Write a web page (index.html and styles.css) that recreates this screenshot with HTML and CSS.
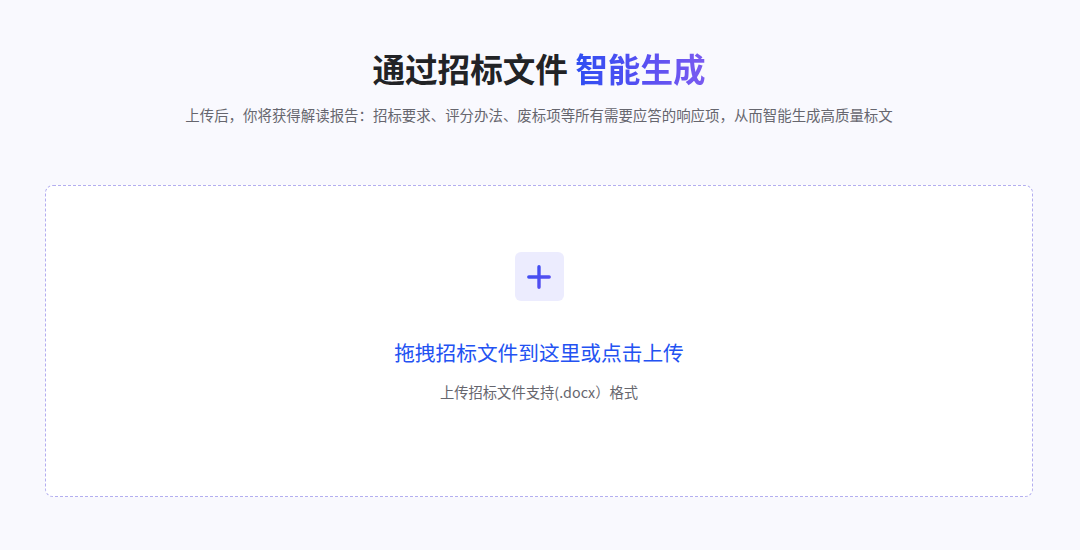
FILE: index.html
```html
<!DOCTYPE html>
<html lang="zh">
<head>
<meta charset="utf-8">
<title>上传招标文件</title>
<link rel="stylesheet" href="styles.css">
</head>
<body>
<main class="page">
  <header class="hero">
    <h1 class="title">通过招标文件 <span class="grad">智能生成</span></h1>
    <p class="subtitle">上传后，你将获得解读报告：招标要求、评分办法、废标项等所有需要应答的响应项，从而智能生成高质量标文</p>
  </header>
  <section class="dropzone">
    <div class="plus-box">
      <svg width="24" height="24" viewBox="0 0 24 24" aria-hidden="true">
        <defs>
          <linearGradient id="pg" x1="0" y1="0" x2="1" y2="1">
            <stop offset="0" stop-color="#3b4ef2"/>
            <stop offset="1" stop-color="#5b4df0"/>
          </linearGradient>
        </defs>
        <path d="M12 1.8v20.4M1.8 12h20.4" stroke="url(#pg)" stroke-width="3.4" stroke-linecap="round" fill="none"/>
      </svg>
    </div>
    <p class="drop-main">拖拽招标文件到这里或点击上传</p>
    <p class="drop-sub">上传招标文件支持(.docx）格式</p>
  </section>
</main>
</body>
</html>
```

FILE: styles.css
```css
html, body {
  margin: 0;
  padding: 0;
}
body {
  background: #f9f9fe;
  font-family: "Noto Sans CJK SC", "Noto Sans", sans-serif;
  width: 1080px;
  height: 550px;
  overflow: hidden;
}
.page {
  padding: 46px 47px 0 45px;
}
.hero {
  text-align: center;
}
.title {
  margin: 0;
  font-size: 32.6px;
  line-height: 44px;
  font-weight: 700;
  color: #222326;
}
.grad {
  background: linear-gradient(90deg, #2e4ef2 0%, #5a50f2 55%, #7a5bf0 100%);
  -webkit-background-clip: text;
  background-clip: text;
  color: transparent;
}
.subtitle {
  margin: 14px 0 0;
  font-size: 14.45px;
  line-height: 22px;
  color: #66666e;
}
.dropzone {
  margin-top: 59px;
  height: 310px;
  box-sizing: content-box;
  border: 1px dashed #b3aef0;
  border-radius: 8px;
  background: #ffffff;
  display: flex;
  flex-direction: column;
  align-items: center;
}
.plus-box {
  margin-top: 66px;
  width: 49px;
  height: 49px;
  border-radius: 6px;
  background: #ececfe;
  display: flex;
  align-items: center;
  justify-content: center;
}
.drop-main {
  margin: 36px 0 0;
  font-size: 20.7px;
  line-height: 30px;
  color: #2352f2;
}
.drop-sub {
  margin: 14px 0 0;
  font-size: 14.3px;
  line-height: 22px;
  color: #66666e;
}
```
